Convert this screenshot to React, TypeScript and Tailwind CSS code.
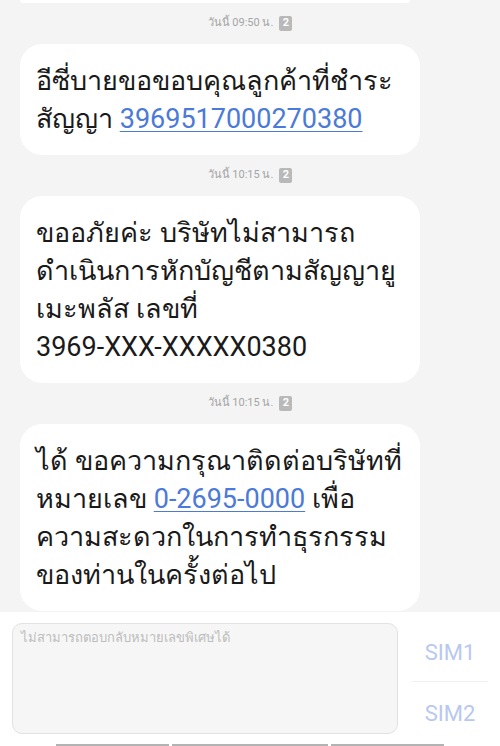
const font = { fontFamily: 'Roboto, "Noto Sans", "DejaVu Sans", sans-serif' };

function Stamp({ time }: { time: string }) {
  return (
    <div className="flex h-[41px] items-center justify-center gap-[5px] text-[11px] text-[#a5a5a5]">
      <span className="mr-[1px]">วันนี้ {time} น.</span>
      <span className="flex h-[15px] w-[13px] items-center justify-center rounded-[2px] bg-[#b9b9b9] text-[11px] font-bold text-white">
        2
      </span>
    </div>
  );
}

function Bubble({ children }: { children: React.ReactNode }) {
  return (
    <div className="ml-5 w-[400px] rounded-[22px] bg-white pl-4 pr-3 pt-[18px] pb-[17px] text-[27px] leading-[38px] text-[#1a1a1a]">
      {children}
    </div>
  );
}

function Link({ children }: { children: React.ReactNode }) {
  return <span className="text-[#4b7ad8] underline decoration-1 underline-offset-[3px]">{children}</span>;
}

export default function App() {
  return (
    <div className="flex h-[746px] w-[500px] flex-col overflow-hidden bg-[#f4f4f4]" style={font}>
      <div className="flex-1">
        <div className="ml-5 h-[3px] w-[390px] rounded-b-[22px] bg-white" />
        <Stamp time="09:50" />
        <Bubble>
          <div className="whitespace-nowrap">อีซี่บายขอขอบคุณลูกค้าที่ชำระ</div>
          <div className="whitespace-nowrap">
            สัญญา <Link>3969517000270380</Link>
          </div>
        </Bubble>
        <Stamp time="10:15" />
        <Bubble>
          <div className="whitespace-nowrap">ขออภัยค่ะ บริษัทไม่สามารถ</div>
          <div className="whitespace-nowrap">ดำเนินการหักบัญชีตามสัญญายู</div>
          <div className="whitespace-nowrap">เมะพลัส เลขที่</div>
          <div className="whitespace-nowrap">3969-XXX-XXXXX0380</div>
        </Bubble>
        <Stamp time="10:15" />
        <Bubble>
          <div className="whitespace-nowrap">ได้ ขอความกรุณาติดต่อบริษัทที่</div>
          <div className="whitespace-nowrap">
            หมายเลข <Link>0-2695-0000</Link> เพื่อ
          </div>
          <div className="whitespace-nowrap">ความสะดวกในการทำธุรกรรม</div>
          <div className="whitespace-nowrap">ของท่านในครั้งต่อไป</div>
        </Bubble>
      </div>

      <div className="flex h-[134px] flex-col bg-white">
        <div className="flex flex-1 pt-[11px] pl-3">
          <div className="h-[111px] w-[386px] rounded-[10px] border border-[#e2e2e2] bg-[#f6f6f6] px-[8px] pt-[4px] text-[13px] text-[#bdbdbd]">
            ไม่สามารถตอบกลับหมายเลขพิเศษได้
          </div>
          <div className="ml-[14px] flex w-[76px] flex-col">
            <div className="flex h-[58px] items-center justify-center text-[22px] text-[#b9c8f0]">SIM1</div>
            <div className="h-px bg-[#f0f0f0]" />
            <div className="flex h-[62px] items-center justify-center text-[22px] text-[#b9c8f0]">SIM2</div>
          </div>
        </div>
        <div className="flex h-[3px] gap-[3px] pl-[56px]">
          <div className="w-[113px] bg-[#b3b3b3]" />
          <div className="w-[156px] bg-[#b3b3b3]" />
          <div className="w-[113px] bg-[#b3b3b3]" />
        </div>
      </div>
    </div>
  );
}
